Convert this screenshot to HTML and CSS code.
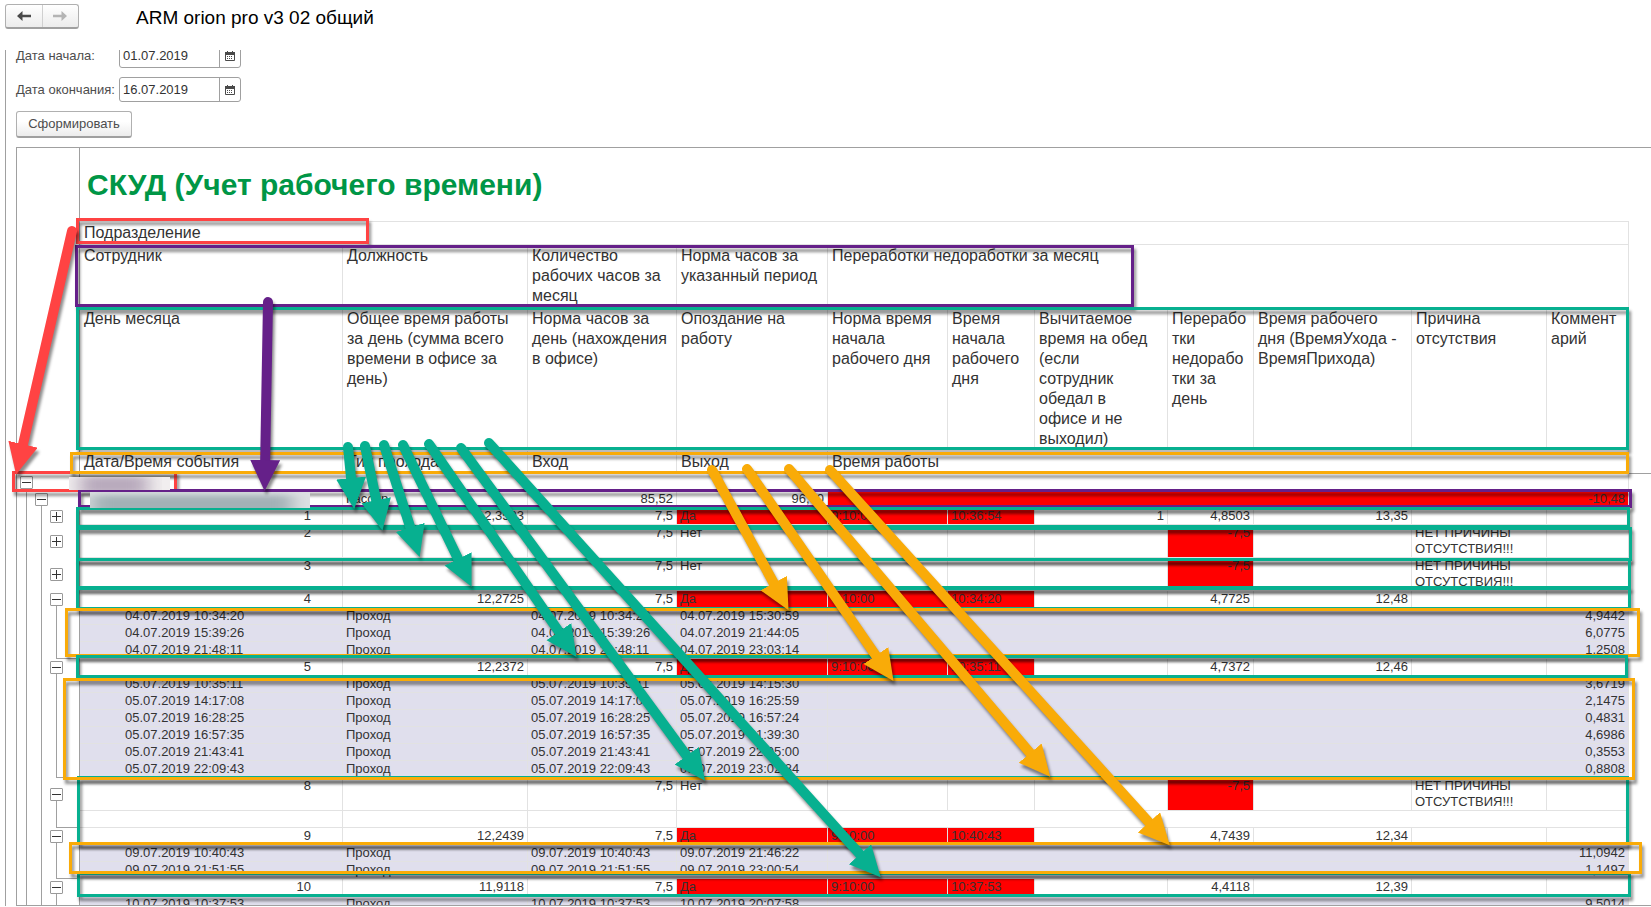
FILE: index.html
```html
<!DOCTYPE html>
<html lang="ru">
<head>
<meta charset="utf-8">
<title>ARM orion pro v3 02 общий</title>
<link rel="stylesheet" href="styles.css">
</head>
<body>
<header class="topbar">
  <nav class="history" aria-label="История">
    <button type="button" aria-label="Назад"><svg width="16" height="12" viewBox="0 0 16 12"><path d="M1 6 6.500 1V4.700H15V7.300H6.500V11Z" fill="#4a4a4a"/></svg></button>
    <button type="button" aria-label="Вперед"><svg width="16" height="12" viewBox="0 0 16 12"><path d="M15 6 9.500 1V4.700H1V7.300H9.500V11Z" fill="#b4b4b4"/></svg></button>
  </nav>
  <h1 class="page-title">ARM orion pro v3 02 общий</h1>
</header>
<main class="content">
  <form class="params">
    <div class="field">
      <label for="date-from">Дата начала:</label>
      <span class="date"><input id="date-from" type="text" value="01.07.2019"><button type="button" aria-label="Выбрать дату начала"><svg width="10" height="10" viewBox="0 0 10 10"><path d="M.5 1.500h9v8h-9z" fill="#fff" stroke="#4a4a4a"/><path d="M0 1h10v3H0zM2 0h1v2H2zM7 0h1v2H7z" fill="#4a4a4a"/><path d="M2 5.500h6M2 7.500h6" stroke="#4a4a4a" stroke-dasharray="1 1"/></svg></button></span>
    </div>
    <div class="field">
      <label for="date-to">Дата окончания:</label>
      <span class="date"><input id="date-to" type="text" value="16.07.2019"><button type="button" aria-label="Выбрать дату окончания"><svg width="10" height="10" viewBox="0 0 10 10"><path d="M.5 1.500h9v8h-9z" fill="#fff" stroke="#4a4a4a"/><path d="M0 1h10v3H0zM2 0h1v2H2zM7 0h1v2H7z" fill="#4a4a4a"/><path d="M2 5.500h6M2 7.500h6" stroke="#4a4a4a" stroke-dasharray="1 1"/></svg></button></span>
    </div>
    <button class="run" type="button">Сформировать</button>
  </form>
  <div class="sheet">
    <table class="report">
      <colgroup>
        <col class="w-gutter"><col class="w-day"><col class="w-post"><col class="w-hours"><col class="w-late"><col class="w-norm"><col class="w-start"><col class="w-lunch"><col class="w-over"><col class="w-span"><col class="w-reason"><col class="w-note"><col>
      </colgroup>
      <thead>
        <tr class="title-row"><td class="gutter"></td><th colspan="11">СКУД (Учет рабочего времени)</th><td class="fill"></td></tr>
        <tr><td class="gutter"></td><th colspan="11">Подразделение</th><td class="fill"></td></tr>
        <tr><td class="gutter"></td><th>Сотрудник</th><th>Должность</th><th>Количество рабочих часов за месяц</th><th>Норма часов за указанный период</th><th colspan="7">Переработки недоработки за месяц</th><td class="fill"></td></tr>
        <tr><td class="gutter"></td><th>День месяца</th><th>Общее время работы за день (сумма всего времени в офисе за день)</th><th>Норма часов за день (нахождения в офисе)</th><th>Опоздание на работу</th><th>Норма время начала рабочего дня</th><th>Время начала рабочего дня</th><th>Вычитаемое<br>время на обед<br>(если<br>сотрудник<br>обедал в<br>офисе и не<br>выходил)</th><th>Переработки недоработки за день</th><th>Время рабочего дня (ВремяУхода - ВремяПрихода)</th><th>Причина отсутствия</th><th>Комментарий</th><td class="fill"></td></tr>
        <tr class="freeze"><td class="gutter"></td><th>Дата/Время события</th><th>Тип прохода</th><th>Вход</th><th>Выход</th><th colspan="7">Время работы</th><td class="fill"></td></tr>
      </thead>
      <tbody>
        <tr><td class="gutter g-unit"><button type="button" class="toggle" aria-label="Свернуть"></button></td><td colspan="11"></td><td class="fill"></td></tr>
        <tr><td class="gutter g-person"><button type="button" class="toggle" aria-label="Свернуть"></button></td><td></td><td>Кассир</td><td class="num">85,52</td><td class="num">96,00</td><td class="num bad" colspan="7">-10,48</td><td class="fill"></td></tr>
        <tr><td class="gutter g-day"><button type="button" class="toggle plus" aria-label="Развернуть"></button></td><td class="day">1</td><td class="num">12,3503</td><td class="num">7,5</td><td class="bad">Да</td><td class="bad">9:10:00</td><td class="bad">10:36:54</td><td class="num">1</td><td class="num">4,8503</td><td class="num">13,35</td><td></td><td></td><td class="fill"></td></tr>
        <tr><td class="gutter g-day"><button type="button" class="toggle plus" aria-label="Развернуть"></button></td><td class="day">2</td><td></td><td class="num">7,5</td><td>Нет</td><td></td><td></td><td></td><td class="num bad">-7,5</td><td></td><td>НЕТ ПРИЧИНЫ ОТСУТСТВИЯ!!!</td><td></td><td class="fill"></td></tr>
        <tr><td class="gutter g-day"><button type="button" class="toggle plus" aria-label="Развернуть"></button></td><td class="day">3</td><td></td><td class="num">7,5</td><td>Нет</td><td></td><td></td><td></td><td class="num bad">-7,5</td><td></td><td>НЕТ ПРИЧИНЫ ОТСУТСТВИЯ!!!</td><td></td><td class="fill"></td></tr>
        <tr><td class="gutter g-day open"><button type="button" class="toggle" aria-label="Свернуть"></button></td><td class="day">4</td><td class="num">12,2725</td><td class="num">7,5</td><td class="bad">Да</td><td class="bad">9:10:00</td><td class="bad">10:34:20</td><td></td><td class="num">4,7725</td><td class="num">12,48</td><td></td><td></td><td class="fill"></td></tr>
        <tr class="event"><td class="gutter g-event"></td><td>04.07.2019 10:34:20</td><td>Проход</td><td>04.07.2019 10:34:20</td><td>04.07.2019 15:30:59</td><td class="num" colspan="7">4,9442</td><td class="fill"></td></tr>
        <tr class="event"><td class="gutter g-event"></td><td>04.07.2019 15:39:26</td><td>Проход</td><td>04.07.2019 15:39:26</td><td>04.07.2019 21:44:05</td><td class="num" colspan="7">6,0775</td><td class="fill"></td></tr>
        <tr class="event"><td class="gutter g-last"></td><td>04.07.2019 21:48:11</td><td>Проход</td><td>04.07.2019 21:48:11</td><td>04.07.2019 23:03:14</td><td class="num" colspan="7">1,2508</td><td class="fill"></td></tr>
        <tr><td class="gutter g-day open"><button type="button" class="toggle" aria-label="Свернуть"></button></td><td class="day">5</td><td class="num">12,2372</td><td class="num">7,5</td><td class="bad">Да</td><td class="bad">9:10:00</td><td class="bad">10:35:11</td><td></td><td class="num">4,7372</td><td class="num">12,46</td><td></td><td></td><td class="fill"></td></tr>
        <tr class="event"><td class="gutter g-event"></td><td>05.07.2019 10:35:11</td><td>Проход</td><td>05.07.2019 10:35:11</td><td>05.07.2019 14:15:30</td><td class="num" colspan="7">3,6719</td><td class="fill"></td></tr>
        <tr class="event"><td class="gutter g-event"></td><td>05.07.2019 14:17:08</td><td>Проход</td><td>05.07.2019 14:17:08</td><td>05.07.2019 16:25:59</td><td class="num" colspan="7">2,1475</td><td class="fill"></td></tr>
        <tr class="event"><td class="gutter g-event"></td><td>05.07.2019 16:28:25</td><td>Проход</td><td>05.07.2019 16:28:25</td><td>05.07.2019 16:57:24</td><td class="num" colspan="7">0,4831</td><td class="fill"></td></tr>
        <tr class="event"><td class="gutter g-event"></td><td>05.07.2019 16:57:35</td><td>Проход</td><td>05.07.2019 16:57:35</td><td>05.07.2019 21:39:30</td><td class="num" colspan="7">4,6986</td><td class="fill"></td></tr>
        <tr class="event"><td class="gutter g-event"></td><td>05.07.2019 21:43:41</td><td>Проход</td><td>05.07.2019 21:43:41</td><td>05.07.2019 22:05:00</td><td class="num" colspan="7">0,3553</td><td class="fill"></td></tr>
        <tr class="event"><td class="gutter g-last"></td><td>05.07.2019 22:09:43</td><td>Проход</td><td>05.07.2019 22:09:43</td><td>05.07.2019 23:02:34</td><td class="num" colspan="7">0,8808</td><td class="fill"></td></tr>
        <tr><td class="gutter g-day open"><button type="button" class="toggle" aria-label="Свернуть"></button></td><td class="day">8</td><td></td><td class="num">7,5</td><td>Нет</td><td></td><td></td><td></td><td class="num bad">-7,5</td><td></td><td>НЕТ ПРИЧИНЫ ОТСУТСТВИЯ!!!</td><td></td><td class="fill"></td></tr>
        <tr><td class="gutter g-last"></td><td></td><td></td><td></td><td colspan="8"></td><td class="fill"></td></tr>
        <tr><td class="gutter g-day open"><button type="button" class="toggle" aria-label="Свернуть"></button></td><td class="day">9</td><td class="num">12,2439</td><td class="num">7,5</td><td class="bad">Да</td><td class="bad">9:10:00</td><td class="bad">10:40:43</td><td></td><td class="num">4,7439</td><td class="num">12,34</td><td></td><td></td><td class="fill"></td></tr>
        <tr class="event"><td class="gutter g-event"></td><td>09.07.2019 10:40:43</td><td>Проход</td><td>09.07.2019 10:40:43</td><td>09.07.2019 21:46:22</td><td class="num" colspan="7">11,0942</td><td class="fill"></td></tr>
        <tr class="event"><td class="gutter g-last"></td><td>09.07.2019 21:51:55</td><td>Проход</td><td>09.07.2019 21:51:55</td><td>09.07.2019 23:00:54</td><td class="num" colspan="7">1,1497</td><td class="fill"></td></tr>
        <tr><td class="gutter g-day open"><button type="button" class="toggle" aria-label="Свернуть"></button></td><td class="day">10</td><td class="num">11,9118</td><td class="num">7,5</td><td class="bad">Да</td><td class="bad">9:10:00</td><td class="bad">10:37:53</td><td></td><td class="num">4,4118</td><td class="num">12,39</td><td></td><td></td><td class="fill"></td></tr>
        <tr class="event"><td class="gutter g-event"></td><td>10.07.2019 10:37:53</td><td>Проход</td><td>10.07.2019 10:37:53</td><td>10.07.2019 20:07:58</td><td class="num" colspan="7">9,5014</td><td class="fill"></td></tr>
      </tbody>
    </table>
  </div>
</main>
<svg class="notes" width="1651" height="905" viewBox="0 0 1651 905" aria-hidden="true">
  <defs>
    <filter id="shade" color-interpolation-filters="sRGB" filterUnits="userSpaceOnUse" x="0" y="200" width="1651" height="705"><feDropShadow dx="2" dy="4" stdDeviation="1.500" flood-color="#000" flood-opacity=".45"/></filter>
    <filter id="soft" color-interpolation-filters="sRGB" x="-20%" y="-60%" width="140%" height="220%"><feGaussianBlur stdDeviation="9 3"/></filter>
    <clipPath id="c1"><path d="M69 477h101v13H69z"/></clipPath>
    <clipPath id="c2"><path d="M90 492h220v16H90z"/></clipPath>
    <marker id="head-red" markerUnits="userSpaceOnUse" markerWidth="32" markerHeight="32" refX="9" refY="15" orient="auto"><path d="M0 0 31 15 0 30Z" fill="#ff4343"/></marker>
    <marker id="head-purple" markerUnits="userSpaceOnUse" markerWidth="32" markerHeight="32" refX="9" refY="15" orient="auto"><path d="M0 0 31 15 0 30Z" fill="#652089"/></marker>
    <marker id="head-green" markerUnits="userSpaceOnUse" markerWidth="32" markerHeight="32" refX="9" refY="15" orient="auto"><path d="M0 0 31 15 0 30Z" fill="#07b090"/></marker>
    <marker id="head-orange" markerUnits="userSpaceOnUse" markerWidth="32" markerHeight="32" refX="9" refY="15" orient="auto"><path d="M0 0 31 15 0 30Z" fill="#f9ab08"/></marker>
  </defs>
  <g class="frames">
    <path class="red" d="M77.500 219.500h290v23h-290z"/>
    <path class="purple" d="M76.500 246.500h1056v59H76.500z"/>
    <path class="green" d="M77.500 308.500h1550v140H77.500z"/>
    <path class="red" d="M13.500 472.500h162v18h-162z"/>
    <path class="orange" d="M71.500 453.500h1556v19H71.500z"/>
    <path class="purple" d="M79.500 490.500h1551v16H79.500z"/>
    <path class="green" d="M77.500 508.500h1551v18H77.500z"/>
    <path class="green" d="M77.500 528.500h1553v31H77.500z"/>
    <path class="green" d="M77.500 559.500h1552v28H77.500z"/>
    <path class="green" d="M77.500 588.500h1552v20H77.500z"/>
    <path class="orange" d="M66.500 609.500h1572v46H66.500z"/>
    <path class="green" d="M77.500 656.500h1549v20H77.500z"/>
    <path class="green" d="M78.500 777.500h1549v66H78.500z"/>
    <path class="orange" d="M64.500 679.500h1569v99H64.500z"/>
    <path class="green" d="M78.500 873.500h1551v22H78.500z"/>
    <path class="orange" d="M70.500 843.500h1570v29H70.500z"/>
  </g>
  <g clip-path="url(#c1)"><path d="M69 477h101v13H69z" fill="#f1eeef"/><path d="M80 476h68v18H80z" fill="#b9abbd" filter="url(#soft)"/></g>
  <g clip-path="url(#c2)"><path d="M90 492h220v16H90z" fill="#dde1e3"/><path d="M92 495h200v20H92z" fill="#a3b1b6" filter="url(#soft)"/></g>
  <g class="arrows">
    <path class="red" d="M72 231 21 453" marker-end="url(#head-red)"/>
    <path class="purple" d="M268 302 265 469" marker-end="url(#head-purple)"/>
    <path class="green" d="M348 447 352 487" marker-end="url(#head-green)"/>
    <path class="green" d="M365 446 378 509" marker-end="url(#head-green)"/>
    <path class="green" d="M384 445 413 536" marker-end="url(#head-green)"/>
    <path class="green" d="M403 445 462 567" marker-end="url(#head-green)"/>
    <path class="green" d="M429 444 564 639" marker-end="url(#head-green)"/>
    <path class="green" d="M461 448 692 763" marker-end="url(#head-green)"/>
    <path class="green" d="M489 443 866 861" marker-end="url(#head-green)"/>
    <path class="orange" d="M712 470 778 591" marker-end="url(#head-orange)"/>
    <path class="orange" d="M747 469 881 663" marker-end="url(#head-orange)"/>
    <path class="orange" d="M789 469 1036 760" marker-end="url(#head-orange)"/>
    <path class="orange" d="M830 470 1155 829" marker-end="url(#head-orange)"/>
  </g>
</svg>
</body>
</html>
```
FILE: styles.css
```css
* { box-sizing: border-box; }

body {
  margin: 0;
  height: 100vh;
  display: flex;
  flex-direction: column;
  position: relative;
  overflow: hidden;
  background: #fff;
  color: #333;
  font: 13px/16px "Liberation Sans", Arial, sans-serif;
}

button, input { font: inherit; color: inherit; }
button { padding: 0; }

/* Top bar */
.topbar {
  flex: none;
  display: flex;
  align-items: flex-start;
  gap: 57px;
  height: 50px;
  padding: 4px 5px;
}
.history {
  display: flex;
  width: 74px;
  height: 25px;
  border: 1px solid #b0b0b0;
  border-bottom: 2px solid #a0a0a0;
  border-radius: 3px;
  background: linear-gradient(#fff, #ececec);
}
.history button {
  flex: 1;
  display: flex;
  align-items: center;
  justify-content: center;
  border: 0;
  background: none;
}
.history button + button { border-left: 1px solid #d0d0d0; }
.page-title {
  margin: 0;
  font-size: 19px;
  line-height: 28px;
  font-weight: 400;
  color: #000;
}

/* Report form */
.content {
  flex: 1;
  min-height: 0;
  display: flex;
  flex-direction: column;
  overflow: hidden;
  margin: 0 0 1px 5px;
  padding-left: 10px;
  border-left: 1px solid #a0a0a0;
}
.params {
  flex: none;
  display: flex;
  flex-direction: column;
  align-items: flex-start;
  gap: 9px;
  margin-top: -7px;
  margin-bottom: 9px;
}
.field { display: flex; align-items: center; color: #4d4d4d; }
.field label { width: 103px; white-space: nowrap; }
.date {
  display: flex;
  width: 122px;
  height: 25px;
  border: 1px solid #a0a0a0;
  border-radius: 3px;
  color: #333;
}
.date input {
  flex: 1;
  min-width: 0;
  padding: 0 3px;
  border: 0;
  background: none;
}
.date button {
  width: 21px;
  display: flex;
  align-items: center;
  justify-content: center;
  border: 0;
  border-left: 1px solid #a0a0a0;
  background: none;
}
.run {
  width: 116px;
  height: 27px;
  border: 1px solid #b0b0b0;
  border-bottom: 2px solid #a0a0a0;
  border-radius: 3px;
  background: linear-gradient(#fff 40%, #ececec);
  color: #4d4d4d;
}

/* Sheet */
.sheet {
  flex: 1;
  min-height: 0;
  overflow: hidden;
  border: 1px solid #a0a0a0;
  border-right: 0;
}
.report {
  width: 100%;
  table-layout: fixed;
  border-collapse: separate;
  border-spacing: 0;
}
.w-gutter { width: 63px; }
.w-day { width: 263px; }
.w-post { width: 185px; }
.w-hours { width: 149px; }
.w-late { width: 151px; }
.w-norm { width: 120px; }
.w-start { width: 87px; }
.w-lunch { width: 133px; }
.w-over { width: 86px; }
.w-span { width: 158px; }
.w-reason { width: 135px; }
.w-note { width: 82px; }

.report th, .report td {
  border: solid #e2e2e2;
  border-width: 0 1px 1px 0;
  text-align: left;
  vertical-align: top;
  font-weight: 400;
}
.report th {
  padding: 1px 4px;
  font-size: 16px;
  line-height: 20px;
  overflow-wrap: anywhere;
}
.report td { height: 17px; padding: 0 3px; }
.report .title-row th {
  height: 74px;
  padding: 0 7px;
  border-right: 0;
  vertical-align: middle;
  font-size: 30px;
  line-height: 34px;
  font-weight: 700;
  color: #009646;
}
.report .freeze > * { border-bottom-color: #a0a0a0; }
.report .num { text-align: right; }
.report .day { padding-right: 31px; text-align: right; }
.report .bad { background: #f00 padding-box; }
.report .event td { background-color: #e0dfed; }
.report .event td:nth-child(2) { padding-left: 45px; }
.report td.fill, .report .event td.fill { border-width: 0; background: none; }
.report .freeze td.fill { border-width: 0 0 1px; }

/* Outline gutter */
.report td.gutter, .report .event td.gutter {
  --line: linear-gradient(#a0a0a0, #a0a0a0);
  padding: 0;
  border-width: 0 1px 0 0;
  border-right-color: #a0a0a0;
  vertical-align: middle;
  background-color: #fff;
  background-repeat: no-repeat;
}
.report .freeze td.gutter { border-width: 0 1px 1px 0; }
.report td.g-unit {
  background-image: var(--line);
  background-position: 9px 100%;
  background-size: 1px 50%;
}
.report td.g-person {
  background-image: var(--line), var(--line);
  background-position: 9px 0, 24px 100%;
  background-size: 1px 100%, 1px 50%;
}
.report td.g-day {
  background-image: var(--line), var(--line);
  background-position: 9px 0, 24px 0;
  background-size: 1px 100%, 1px 100%;
}
.report td.open {
  background-image: var(--line), var(--line), var(--line);
  background-position: 9px 0, 24px 0, 39px 100%;
  background-size: 1px 100%, 1px 100%, 1px 50%;
}
.report td.g-event {
  background-image: var(--line), var(--line), var(--line);
  background-position: 9px 0, 24px 0, 39px 0;
  background-size: 1px 100%;
}
.report td.g-last {
  background-image: var(--line), var(--line), var(--line), var(--line);
  background-position: 9px 0, 24px 0, 39px 0, 39px 100%;
  background-size: 1px 100%, 1px 100%, 1px 100%, 21px 1px;
}
.toggle {
  display: block;
  width: 13px;
  height: 13px;
  border: 1px solid #999;
  border-radius: 1px;
  background: linear-gradient(#333, #333) center / 9px 1px no-repeat #fff;
}
.toggle.plus {
  background:
    linear-gradient(#333, #333) center / 9px 1px no-repeat,
    linear-gradient(#333, #333) center / 1px 9px no-repeat #fff;
}
.g-unit .toggle { margin-left: 3px; }
.g-person .toggle { margin-left: 18px; }
.g-day .toggle { margin-left: 33px; }

/* Annotations drawn over the sheet */
.notes {
  position: absolute;
  top: 0;
  left: 0;
  pointer-events: none;
}
.frames path { fill: none; stroke-width: 3; filter: url(#shade); }
.arrows path { fill: none; stroke-width: 10; stroke-linecap: round; filter: url(#shade); }
.red { stroke: #ff4343; }
.purple { stroke: #652089; }
.green { stroke: #07b090; }
.orange { stroke: #f9ab08; }
.arrows marker path, marker path { stroke: none; }
```
